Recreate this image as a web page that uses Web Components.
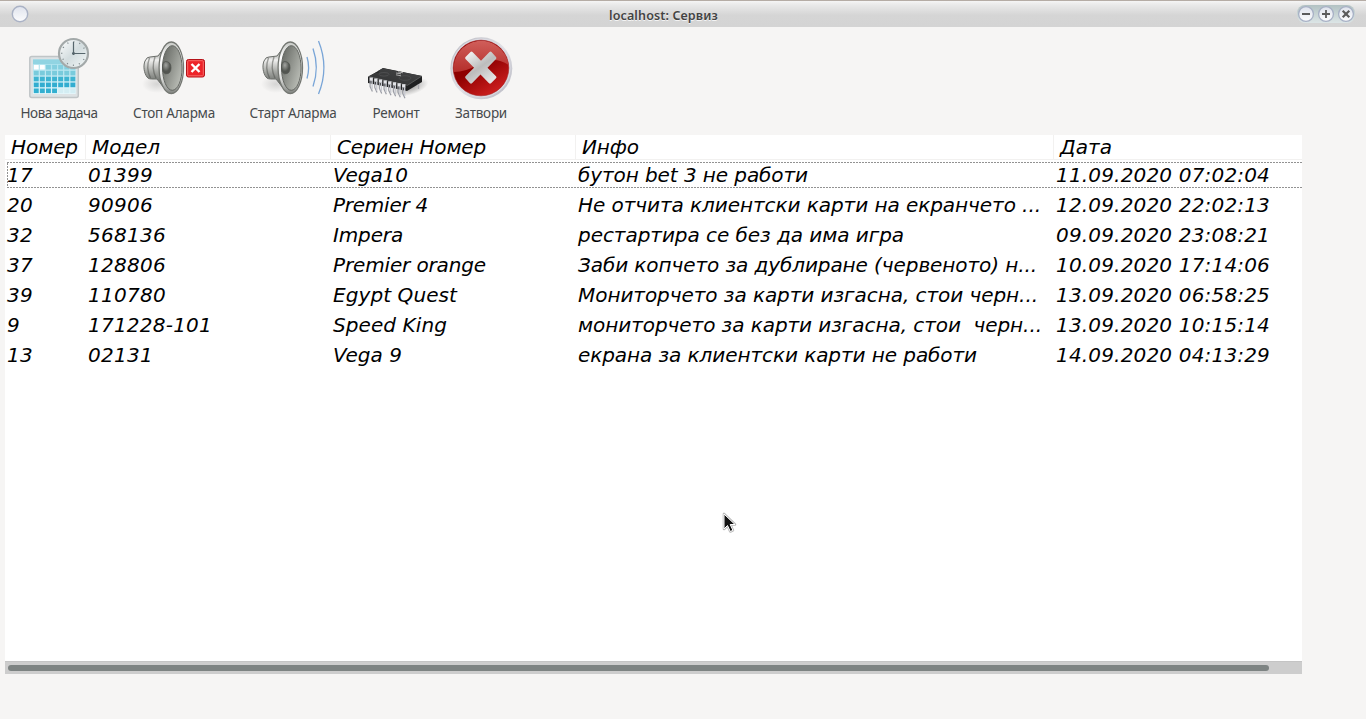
<!DOCTYPE html>
<html lang="bg">
<head>
<meta charset="utf-8">
<title>localhost: Сервиз</title>
<style>
html, body { margin: 0; height: 100%; overflow: hidden; background: #f6f5f4; }
</style>
</head>
<body>
<service-window></service-window>

<script>
const define = (name, html, setup) => {
  const template = document.createElement('template');
  template.innerHTML = html;
  customElements.define(name, class extends HTMLElement {
    connectedCallback() {
      if (this.shadowRoot) return;
      this.attachShadow({ mode: 'open' }).append(template.content.cloneNode(true));
      if (setup) setup(this, this.shadowRoot);
    }
  });
};

/* Single line of text whose tracking is adjusted to a given width (w). */
define('fit-text', `<style>
:host { display: inline-block; white-space: pre; }
span { display: inline-block; }
</style><span><slot></slot></span>`, (host, root) => {
  const span = root.querySelector('span');
  const want = Number(host.getAttribute('w'));
  const n = host.textContent.length;
  if (want && n > 1) {
    const have = span.getBoundingClientRect().width;
    span.style.letterSpacing = ((want - have) / n).toFixed(4) + 'px';
  }
});

define('title-bar', `<style>
:host { display: grid; grid-template-columns: 120px 1fr 120px; align-items: center; height: 27px; box-sizing: border-box;
  border-top: 1px solid #b5aca5; background: linear-gradient(#f5f5f5 0, #e9e9e9 15%, #d5d5d5 55%, #d4d4d4 100%);
  font: 600 12.5px "Noto Sans", sans-serif; color: #434343; text-shadow: 0 1px 0 #f4f4f4; }
svg { display: block; }
.name { text-align: center; margin-left: -39px; padding-top: 2px; }
.right { justify-self: end; }
</style>
<svg width="40" height="26" viewBox="0 1 40 26"><defs><linearGradient id="b" x2="0" y2="1"><stop stop-color="#dfe3ed"/><stop offset="1" stop-color="#fcfcfd"/></linearGradient></defs>
<circle cx="20" cy="14" r="7.700" fill="url(#b)" stroke="#aab2c5" stroke-width="1.4"/></svg>
<div class="name"><slot></slot></div>
<svg class="right" width="76" height="26" viewBox="1290 1 76 26"><defs><linearGradient id="b" x2="0" y2="1"><stop stop-color="#dde1ec"/><stop offset="1" stop-color="#fdfdfe"/></linearGradient><linearGradient id="p" x2="0" y2="1"><stop stop-color="#b2c2c3"/><stop offset="1" stop-color="#dce5e6"/></linearGradient></defs>
<rect x="1297" y="5" width="58" height="18" rx="8" fill="url(#p)"/>
<g fill="url(#b)" stroke="#a7b0c5" stroke-width="1.3"><circle cx="1306" cy="14" r="7.4"/><circle cx="1326" cy="14" r="7.4"/><circle cx="1346" cy="14" r="7.4"/></g>
<g stroke="#5b5b5b" stroke-width="1.8"><path d="M1302 14h8M1322 14h8M1326 10v8"/><path d="M1342.700 10.700l6.600 6.600m0-6.600l-6.600 6.600" stroke-width="2.2"/></g></svg>`);

define('tool-button', `<style>
:host { display: flex; flex-direction: column; align-items: center; flex: none; color: #464a4c; font: 13.5px/20px "Noto Sans", sans-serif; }
.label { margin-top: 3px; white-space: nowrap; }
</style><slot name="icon"></slot><div class="label"><slot></slot></div>`,
  host => { host.style.width = host.getAttribute('width') + 'px'; });

define('icon-task', `<style>:host,svg{display:block;width:64px;height:64px}</style>
<svg viewBox="27 36 64 64"><defs>
<linearGradient id="s" x2="1" y2="1"><stop stop-color="#fff"/><stop offset=".5" stop-color="#d3dddf"/><stop offset="1" stop-color="#f4f8f8"/></linearGradient>
<linearGradient id="c" x2="0" y2="1"><stop stop-color="#a5dfec"/><stop offset="1" stop-color="#e5f6fa"/></linearGradient></defs>
<rect x="29.800" y="56.500" width="48.500" height="41" rx="2" fill="#dde2e4" stroke="#c0c5c7" stroke-width="1.5"/>
<rect x="33" y="59.500" width="42.700" height="34.500" fill="url(#c)"/><rect x="33" y="59.500" width="42.700" height="4.500" fill="#91d4e2"/>
<g id="days"></g>
<circle cx="73.500" cy="53.500" r="14.500" fill="url(#s)" stroke="#a3a9a9" stroke-width="2.2"/>
<circle cx="73.500" cy="53.500" r="11.800" fill="none" stroke="#7e898c" stroke-width="1.4" stroke-dasharray="1 5.179" stroke-dashoffset=".5"/>
<path d="M73.500 42v13M72 53.500h13" stroke="#56666c" stroke-width="1.2"/><circle cx="73.500" cy="53.500" r="1.4" fill="#56666c"/></svg>`,
(host, root) => {
  let out = '';
  for (let y = 0; y < 5; y++) for (let x = 0; x < 7; x++) {
    const pale = (y === 0 && x < 2) || (y === 4 && x > 3);
    const fill = pale ? (y === 0 ? '#fff' : '#d3edf3') : ['#84cfdf', '#79cbdc', '#3fb4d1', '#32add0', '#32afd0'][y];
    out += `<rect x="${33.8 + x * 6.1}" y="${64.900 + y * 5.9}" width="4.9" height="4.6" fill="${fill}"/>`;
  }
  root.querySelector('#days').innerHTML = out;
});

/* Loudspeaker; the "state" attribute picks the mute badge or the sound waves. */
define('icon-speaker', `<style>:host,svg{display:block;width:64px;height:64px} svg{overflow:visible}
.off,.on{display:none} :host([state=off]) .off,:host([state=on]) .on{display:inline}</style>
<svg viewBox="142 36 64 64"><defs>
<linearGradient id="r" x2="0" y2="1"><stop stop-color="#c6c8c4"/><stop offset=".3" stop-color="#fff"/><stop offset=".7" stop-color="#dfe0de"/><stop offset="1" stop-color="#7f827e"/></linearGradient>
<linearGradient id="k" x2="0" y2="1"><stop stop-color="#6b6e69"/><stop offset=".3" stop-color="#f0f0ef"/><stop offset=".6" stop-color="#a3a5a1"/><stop offset="1" stop-color="#50534f"/></linearGradient>
<linearGradient id="i" x1="0" x2="1" y2=".7"><stop stop-color="#5f625d"/><stop offset="1" stop-color="#babdb6"/></linearGradient>
<radialGradient id="d" cx=".4" cy=".3"><stop stop-color="#a2a4a0"/><stop offset="1" stop-color="#525550"/></radialGradient>
<radialGradient id="h"><stop stop-color="#888" stop-opacity=".3"/><stop offset="1" stop-color="#888" stop-opacity="0"/></radialGradient></defs>
<ellipse cx="157" cy="84" rx="15" ry="9" fill="url(#h)"/>
<path d="M150 57q-3-.5-5 4c-2 5-1 12 2 16 1 2 4 2 6 2h4l7 9V48l-6 8z" fill="url(#k)" stroke="#6b6e6a" stroke-width="1"/>
<path d="M149.500 58q-4 10 1 20M155 57q-4 11 1 21" fill="none" stroke="#4d504c" stroke-opacity=".5" stroke-width="1.4"/>
<ellipse cx="171.300" cy="67.800" rx="12.200" ry="25.800" fill="url(#r)" stroke="#747772" stroke-width="1.3"/>
<ellipse cx="172.300" cy="68" rx="9.800" ry="22.300" fill="url(#i)" stroke="#626560" stroke-width="1"/>
<path d="M162.500 67q0-5 3-5.500 5.500 0 5.500 6.300t-5.500 6q-3-.8-3-6.800" fill="url(#d)" stroke="#4f524d" stroke-width=".7"/>
<g class="off"><rect x="186.500" y="59.500" width="18" height="17.500" rx="2" fill="#ed2329" stroke="#b51218"/><rect x="187.700" y="60.700" width="15.600" height="15.100" rx="1" fill="none" stroke="#f66a68"/><path d="M191.500 64l8 8m0-8l-8 8" stroke="#fff" stroke-width="2.4"/></g>
<g class="on" fill="none" stroke="#79a5d7" stroke-width="1.3"><path d="M188 57q3.200 10.500 0 21.500M194 48.500q6.600 19 0 38M199.500 41q10.800 26.500 0 53"/></g></svg>`);

define('icon-chip', `<style>:host,svg{display:block;width:64px;height:64px}</style>
<svg viewBox="364 36 64 64"><defs><linearGradient id="t" x1="0" y1="1" x2="1" y2="0"><stop stop-color="#303132"/><stop offset="1" stop-color="#454647"/></linearGradient>
<radialGradient id="h"><stop stop-color="#555" stop-opacity=".55"/><stop offset="1" stop-color="#555" stop-opacity="0"/></radialGradient></defs>
<ellipse cx="410" cy="87" rx="19" ry="8" fill="url(#h)" transform="rotate(-16 410 87)"/>
<path d="M368 77l15-9 39 8v6l-15 9-39-8z" fill="#202122"/>
<path d="M368 76.500l8-4q2 .8 3-.4l-1-1.200 5-2.700 39 7.800-14.500 9.300z" fill="url(#t)"/>
<path d="M368 76.500l39.500 8.800M407.500 85.300L422 76" stroke="#727374" stroke-width=".6" fill="none"/>
<ellipse cx="384" cy="74.300" rx="5" ry="1.800" fill="none" stroke="#606162" stroke-width=".5"/>
<ellipse cx="405" cy="78" rx="6" ry="2.300" fill="none" stroke="#555657" stroke-width=".5"/>
<path d="M396 73l5 .8m-3-2l5 1m-7 2l5 1" stroke="#aaa" stroke-width="1"/>
<path d="M418.500 84v5" stroke="#aaaab0" stroke-width="1.3"/><g id="pins"></g></svg>`,
(host, root) => {
  let out = '';
  for (let i = 0; i < 8; i++) {
    const x = 369.5 + i * 4.65, y = 77.5 + i * .95;
    out += `<path d="M${x} ${y}h3.400v3.400h-3.400z" fill="#e2e3e7"/><path d="M${x + .6} ${y + 3}v6l2.300 5" fill="none" stroke="#9a9ca4" stroke-width="1.2"/><path d="M${x + 2.6} ${y + 3}v9" stroke="#c9cbd2" stroke-width="1.4"/>`;
  }
  root.querySelector('#pins').innerHTML = out;
});

define('icon-close', `<style>:host,svg{display:block;width:64px;height:64px}</style>
<svg viewBox="449 36 64 64"><defs><linearGradient id="m" x2="1" y2="1"><stop stop-color="#b5b5bd"/><stop offset=".5" stop-color="#e2e2e7"/><stop offset="1" stop-color="#b5b5bf"/></linearGradient>
<linearGradient id="r" x2=".6" y2="1"><stop offset=".55" stop-color="#8e0000"/><stop offset="1" stop-color="#c91d1d"/></linearGradient>
<linearGradient id="g" x2="0" y2="1"><stop stop-color="#d05e5a"/><stop offset="1" stop-color="#b52e2b"/></linearGradient>
<linearGradient id="x" x2=".7" y2="1"><stop stop-color="#fafafa"/><stop offset=".55" stop-color="#bcbcbc"/><stop offset="1" stop-color="#e4e4e4"/></linearGradient></defs>
<circle cx="481.300" cy="68.300" r="31" fill="url(#m)"/><circle cx="481" cy="68" r="29.500" fill="#dadae1"/><circle cx="481" cy="68" r="27.800" fill="url(#r)" stroke="#a61b1b" stroke-width=".6"/>
<path d="M453.800 72A27.600 27.600 0 1 1 508.600 65C497 57 486 60 477 65Q466 72 453.800 72z" fill="url(#g)"/>
<path d="M465.500 57l5-5q1-.8 2 0l8.500 8.700 8.500-8.700q1-.8 2 0l4.500 5q.8 1 0 2l-8.500 8.700 8.500 8.600q1 1 0 2l-5 5q-1 .8-2 0l-8.500-8.700-8.500 8.700q-1 .8-2 0l-4.500-5q-.8-1 0-2l8.500-8.600-8.500-8.700q-.8-1 0-2z" fill="url(#x)"/></svg>`);

define('tool-bar', `<style>:host{display:flex;gap:21px;padding:9px 13px 0;height:99px}</style><slot></slot>`);

define('scroll-strip', `<style>
:host { display: block; height: 13px; box-sizing: border-box; padding: 3px 33px 0 3px; border-top: 1px solid #c4c4c4; background: #cdcdcd; }
div { height: 6px; border-radius: 3px; background: #7d8382; }
</style><div></div>`);

const columns = '81px 245px 245px 478px 248px';
define('head-row', `<style>
:host { display: grid; grid-template-columns: ${columns}; height: 24px; border-bottom: 1px solid #f2f1f0; line-height: 24px; }
::slotted(*) { padding-left: 6px; border-right: 1px solid #f2f1f0; box-sizing: border-box; }
::slotted(:last-child) { border-right: 0; }
</style><slot></slot>`);

define('data-row', `<style>
:host { display: grid; grid-template-columns: ${columns}; height: 30px; line-height: 26px; padding-top: 2px; box-sizing: border-box; position: relative; }
::slotted(*) { padding-left: 2px; overflow: hidden; box-sizing: border-box; }
.focus { display: none; }
:host([focused]) .focus { display: block; position: absolute; left: 2px; top: 2px; height: 26px; }
</style><slot></slot><svg class="focus" width="1300" height="26"><path d="M0 .5H1300M0 25.500H1300M.5 1V25" stroke="#929292" stroke-dasharray="2 1"/></svg>`);

define('task-table', `<style>
:host { display: flex; flex-direction: column; width: 1297px; height: 539px; margin: 0 0 0 5px; background: #fff; color: #000; overflow: hidden; font: italic 20px "DejaVu Sans", sans-serif; }
.rows { flex: 1; }
</style><slot name="head"></slot><div class="rows"><slot></slot></div><scroll-strip></scroll-strip>`);

const rows = [
  [['17', 26], ['01399', 65], ['Vega10', 75], ['бутон bet 3 не работи', 230], ['11.09.2020 07:02:04', 214]],
  [['20', 26], ['90906', 65], ['Premier 4', 95], ['Не отчита клиентски карти на екранчето ...', 463], ['12.09.2020 22:02:13', 214]],
  [['32', 26], ['568136', 78], ['Impera', 70], ['рестартира се без да има игра', 326], ['09.09.2020 23:08:21', 214]],
  [['37', 26], ['128806', 78], ['Premier orange', 153], ['Заби копчето за дублиране (червеното) н...', 459], ['10.09.2020 17:14:06', 214]],
  [['39', 26], ['110780', 78], ['Egypt Quest', 124], ['Мониторчето за карти изгасна, стои черн...', 460], ['13.09.2020 06:58:25', 214]],
  [['9', 13], ['171228-101', 124], ['Speed King', 114], ['мониторчето за карти изгасна, стои  черн...', 464], ['13.09.2020 10:15:14', 214]],
  [['13', 26], ['02131', 65], ['Vega 9', 69], ['екрана за клиентски карти не работи', 399], ['14.09.2020 04:13:29', 214]]
];
const cells = list => list.map(([t, w]) => `<div><fit-text w="${w}">${t}</fit-text></div>`).join('');

define('service-window', `<style>
:host { display: block; position: relative; width: 1366px; height: 719px; background: #f6f5f4; overflow: hidden; }
.cursor { position: absolute; left: 722px; top: 512px; }
</style>
<title-bar><fit-text w="109">localhost: Сервиз</fit-text></title-bar>
<tool-bar>
<tool-button width="92"><icon-task slot="icon"></icon-task><fit-text w="77">Нова задача</fit-text></tool-button>
<tool-button width="96"><icon-speaker slot="icon" state="off"></icon-speaker><fit-text w="82">Стоп Аларма</fit-text></tool-button>
<tool-button width="100"><icon-speaker slot="icon" state="on"></icon-speaker><fit-text w="87">Старт Аларма</fit-text></tool-button>
<tool-button width="64"><icon-chip slot="icon"></icon-chip><fit-text w="47">Ремонт</fit-text></tool-button>
<tool-button width="64"><icon-close slot="icon"></icon-close><fit-text w="52">Затвори</fit-text></tool-button>
</tool-bar>
<task-table><head-row slot="head">${cells([['Номер', 67], ['Модел', 68], ['Сериен Номер', 149], ['Инфо', 57], ['Дата', 52]])}</head-row>
${rows.map((r, i) => `<data-row${i ? '' : ' focused'}>${cells(r)}</data-row>`).join('')}
</task-table>
<svg class="cursor" width="16" height="23" viewBox="0 0 16 23"><path d="M2 2v15l3.500-3.500 2.800 6 2.600-1.200-2.700-5.800H13z" fill="#111" stroke="#bbb" stroke-width="2.600" stroke-linejoin="round"/><path d="M2 2v15l3.500-3.500 2.800 6 2.600-1.200-2.700-5.800H13z" fill="#111" stroke="#fff" stroke-width="1"/></svg>`);
</script>
</body>
</html>
